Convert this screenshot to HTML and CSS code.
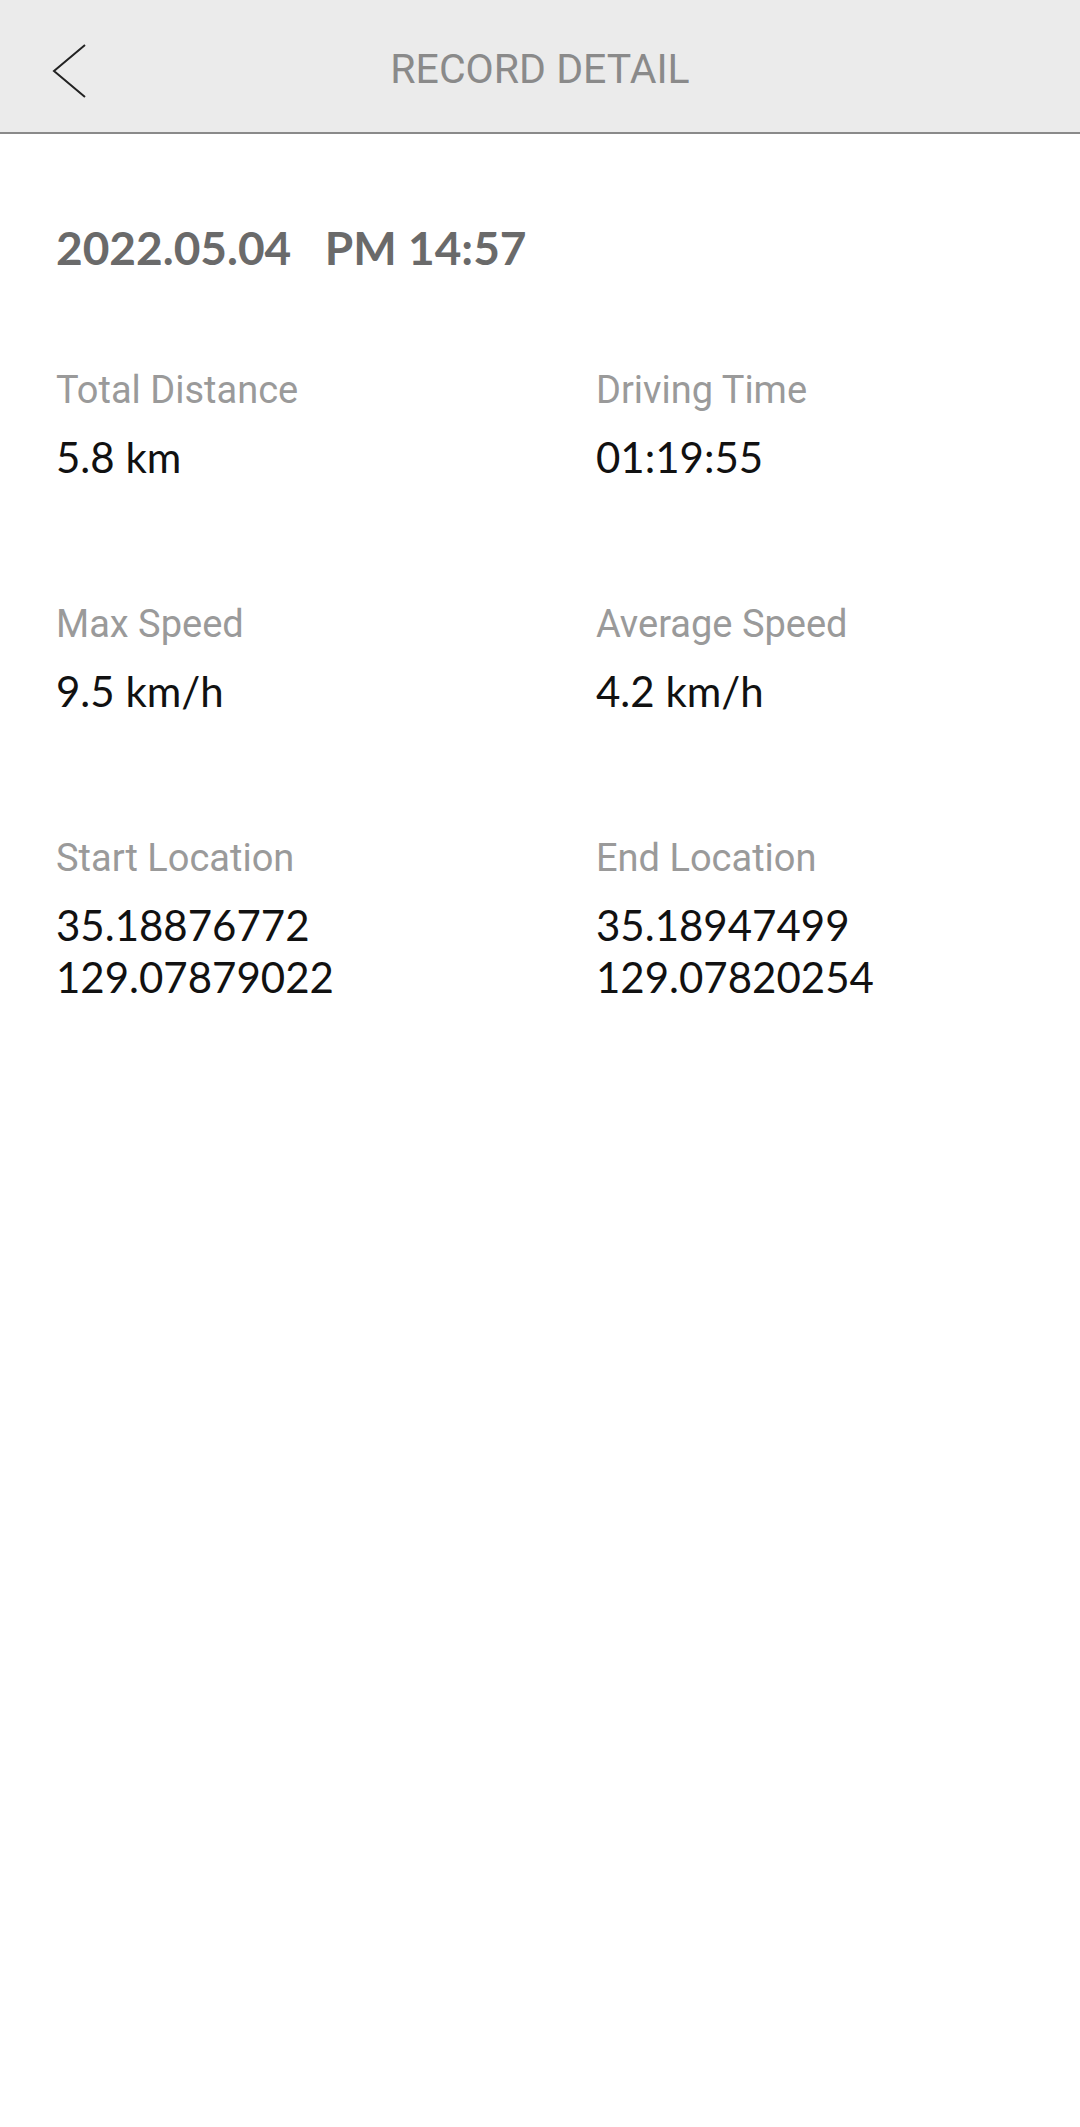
FILE: index.html
```html
<!DOCTYPE html>
<html lang="en">
  <head>
    <meta charset="UTF-8" />
    <meta name="viewport" content="width=device-width, initial-scale=1.0" />
    <title>Record Detail</title>
    <link rel="stylesheet" href="styles.css">
  </head>
  <body>
    <header class="topbar">
      <button class="back" aria-label="Back">
        <svg width="40" height="60" viewBox="0 0 40 60">
          <polyline points="35,4 4,30 35,56" fill="none" stroke="#222" stroke-width="2" />
        </svg>
      </button>
      <h1 class="title">RECORD DETAIL</h1>
    </header>

    <main class="content">
      <p class="date">2022.05.04&nbsp;&nbsp;&nbsp;PM 14:57</p>

      <div class="stats">
        <div class="stat">
          <span class="label">Total Distance</span>
          <span class="value">5.8 km</span>
        </div>
        <div class="stat">
          <span class="label">Driving Time</span>
          <span class="value">01:19:55</span>
        </div>
        <div class="stat">
          <span class="label">Max Speed</span>
          <span class="value">9.5 km/h</span>
        </div>
        <div class="stat">
          <span class="label">Average Speed</span>
          <span class="value">4.2 km/h</span>
        </div>
        <div class="stat">
          <span class="label">Start Location</span>
          <span class="value">35.18876772<br />129.07879022</span>
        </div>
        <div class="stat">
          <span class="label">End Location</span>
          <span class="value">35.18947499<br />129.07820254</span>
        </div>
      </div>
    </main>
  </body>
</html>
```

FILE: styles.css
```css
body {
  margin: 0;
  background-color: #ffffff;
  font-family: Roboto, "Liberation Sans", sans-serif;
}

.topbar {
  position: relative;
  height: 132px;
  background-color: #ebebeb;
  border-bottom: 2px solid #8a8a8a;
  display: flex;
  align-items: center;
  justify-content: center;
}

.back {
  position: absolute;
  left: 50px;
  top: 41px;
  background: none;
  border: none;
  padding: 0;
  width: 40px;
  height: 60px;
}

.title {
  margin: 0;
  padding-top: 6px;
  font-size: 41px;
  font-weight: 400;
  color: #8a8a8a;
}

.content {
  padding: 0 56px;
}

.date {
  margin: 0;
  padding-top: 84px;
  font-family: Lato, "Liberation Sans", sans-serif;
  font-size: 46px;
  font-weight: 700;
  color: #6a6a6a;
  line-height: 60px;
}

.stats {
  display: grid;
  grid-template-columns: 540px 1fr;
  row-gap: 117px;
  margin-top: 88px;
}

.stat {
  display: flex;
  flex-direction: column;
}

.label {
  font-size: 38px;
  color: #9a9a9a;
  line-height: 48px;
}

.value {
  margin-top: 17px;
  font-family: Lato, "Liberation Sans", sans-serif;
  font-size: 42px;
  color: #111111;
  line-height: 52px;
}
```
